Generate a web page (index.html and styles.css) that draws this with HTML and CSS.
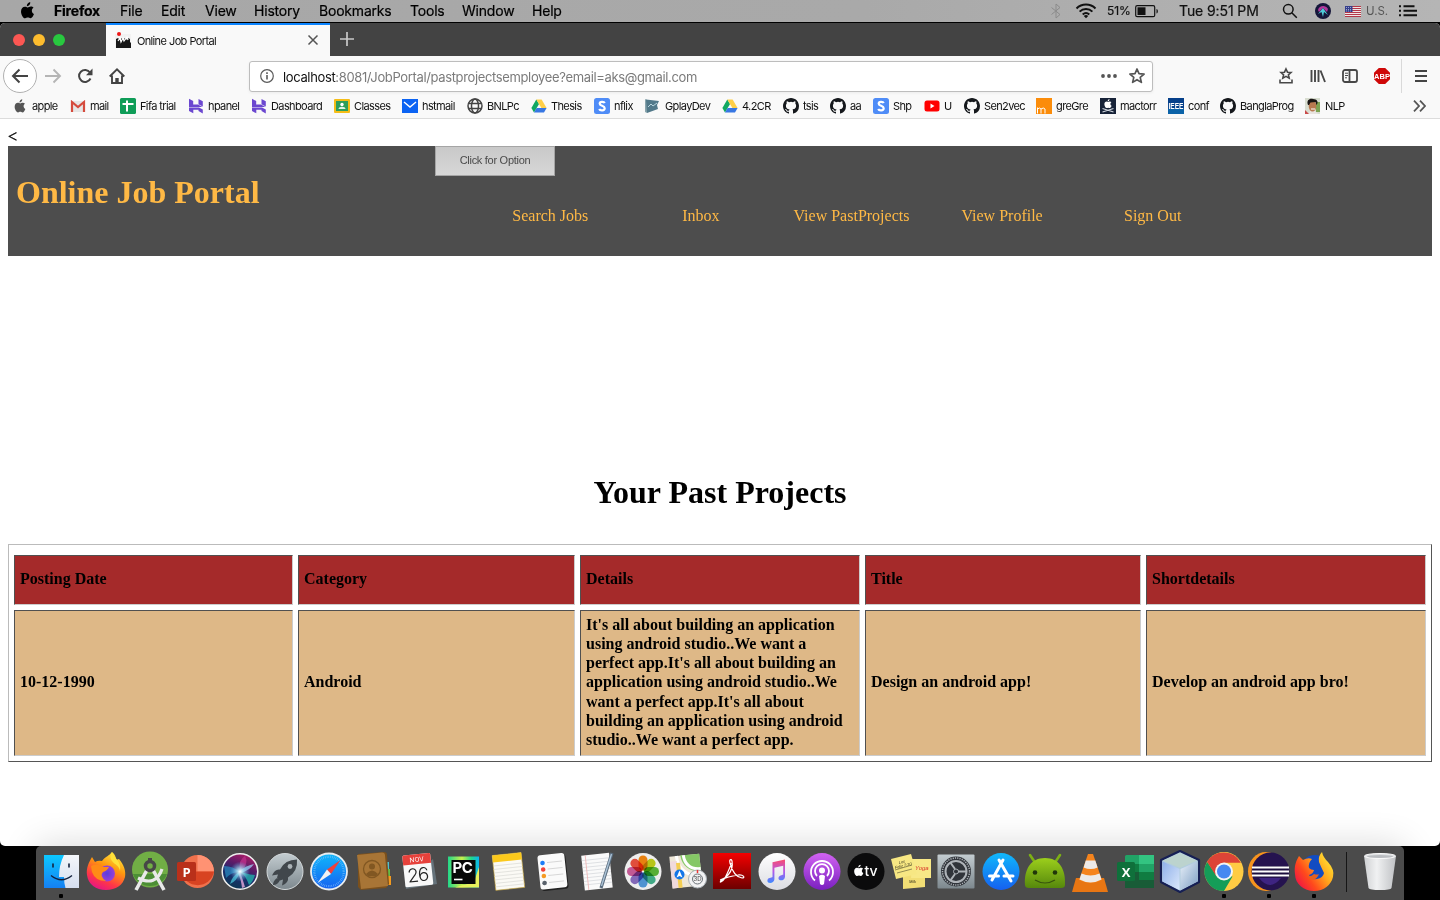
FILE: index.html
```html
<!DOCTYPE html>
<html lang="en">
<head>
<meta charset="utf-8">
<title>Online Job Portal</title>
<link rel="stylesheet" href="styles.css">
</head>
<body>
<svg class="defs" width="0" height="0">
  <defs>
    <linearGradient id="gBlue" x1="0" y1="0" x2="0" y2="1"><stop offset="0" stop-color="#10b8fb"/><stop offset="1" stop-color="#1560f0"/></linearGradient>
    <linearGradient id="gFinder" x1="0" y1="0" x2="0" y2="1"><stop offset="0" stop-color="#0cc8ff"/><stop offset="1" stop-color="#1580f3"/></linearGradient>
    <linearGradient id="gFace" x1="0" y1="0" x2="0" y2="1"><stop offset="0" stop-color="#f4f6fa"/><stop offset="1" stop-color="#d6dff0"/></linearGradient>
    <linearGradient id="gFox" x1=".8" y1="0" x2=".3" y2="1"><stop offset="0" stop-color="#fff044"/><stop offset=".4" stop-color="#ff980e"/><stop offset=".75" stop-color="#ff3647"/><stop offset="1" stop-color="#e31587"/></linearGradient>
    <linearGradient id="gFox2" x1="1" y1=".1" x2="0" y2=".8"><stop offset="0" stop-color="#fff23a"/><stop offset=".4" stop-color="#ffa51c"/><stop offset=".7" stop-color="#ff4a1c"/><stop offset="1" stop-color="#f01048"/></linearGradient>
    <radialGradient id="gPurple"><stop offset="0" stop-color="#5a3cdc"/><stop offset="1" stop-color="#9a3fd8"/></radialGradient>
    <linearGradient id="gSilver" x1="0" y1="0" x2="0" y2="1"><stop offset="0" stop-color="#c3ccd0"/><stop offset="1" stop-color="#7d888e"/></linearGradient>
    <linearGradient id="gSiri" x1=".7" y1="0" x2=".3" y2="1"><stop offset="0" stop-color="#b01c66"/><stop offset=".35" stop-color="#5a1c68"/><stop offset=".6" stop-color="#1d2c70"/><stop offset="1" stop-color="#0a3a52"/></linearGradient>
    <radialGradient id="gGlow"><stop offset="0" stop-color="#fff"/><stop offset=".3" stop-color="#b4e6f5" stop-opacity=".8"/><stop offset="1" stop-color="#4fa8e0" stop-opacity="0"/></radialGradient>
    <linearGradient id="gAcro" x1="0" y1="0" x2="0" y2="1"><stop offset="0" stop-color="#f40000"/><stop offset="1" stop-color="#6d0000"/></linearGradient>
    <linearGradient id="gNote" x1="0" y1="0" x2="0" y2="1"><stop offset="0" stop-color="#fa4b6e"/><stop offset=".5" stop-color="#b457e8"/><stop offset="1" stop-color="#3d8bff"/></linearGradient>
    <linearGradient id="gPod" x1="0" y1="0" x2="0" y2="1"><stop offset="0" stop-color="#d263f2"/><stop offset="1" stop-color="#7a20c0"/></linearGradient>
    <linearGradient id="gDroid" x1="0" y1="0" x2="0" y2="1"><stop offset="0" stop-color="#9ccf1c"/><stop offset="1" stop-color="#56880c"/></linearGradient>
    <linearGradient id="gPc" x1="0" y1="0" x2="1" y2="0"><stop offset="0" stop-color="#21d789"/><stop offset=".45" stop-color="#c8f04c"/><stop offset=".75" stop-color="#21d789"/><stop offset="1" stop-color="#09b5f2"/></linearGradient>
    <linearGradient id="gCubeL" x1="0" y1="0" x2="1" y2="1"><stop offset="0" stop-color="#8fb0ea"/><stop offset="1" stop-color="#dbe8fb"/></linearGradient>
    <linearGradient id="gCubeR" x1="0" y1="0" x2="1" y2="1"><stop offset="0" stop-color="#e6eef8"/><stop offset="1" stop-color="#7fa0c4"/></linearGradient>
    <linearGradient id="gTrash" x1="0" y1="0" x2="1" y2="0"><stop offset="0" stop-color="#cfd1d3"/><stop offset=".4" stop-color="#f0f1f2"/><stop offset="1" stop-color="#bfc1c4"/></linearGradient>
    <linearGradient id="gMusic" x1="0" y1="0" x2="0" y2="1"><stop offset="0" stop-color="#fff"/><stop offset="1" stop-color="#dcdde2"/></linearGradient>

    <symbol id="apple" viewBox="0 0 14 16"><path d="M9.600.2c.1 1-.3 1.900-.9 2.600-.6.700-1.500 1.200-2.300 1.100-.1-1 .3-1.900.9-2.500C7.900.700 8.900.200 9.600.200zM12.700 5.500c-1.100.7-1.600 1.600-1.600 2.800 0 1.300.8 2.500 2 3-.5 1.400-1.800 4-3.300 4-.9 0-1.400-.6-2.500-.6s-1.600.6-2.500.6C2.900 15.400.9 11.800.9 8.900c0-2.700 1.700-4.500 3.700-4.500 1.100 0 2 .7 2.600.7.700 0 1.700-.8 3-.8 1 0 1.900.4 2.500 1.200z"/></symbol>
    <symbol id="github" viewBox="0 0 16 16"><path fill="#15181c" d="M8 0C3.580 0 0 3.580 0 8c0 3.540 2.290 6.530 5.470 7.590.4.070.55-.17.55-.38 0-.19-.01-.82-.01-1.490-2.010.37-2.530-.49-2.690-.94-.09-.23-.48-.94-.82-1.130-.28-.15-.68-.52-.01-.53.63-.01 1.080.58 1.230.82.72 1.210 1.870.87 2.330.66.07-.52.28-.87.510-1.070-1.780-.2-3.640-.89-3.640-3.950 0-.87.310-1.590.82-2.150-.08-.2-.36-1.020.08-2.120 0 0 .67-.21 2.200.82a7.400 7.400 0 0 1 4 0c1.530-1.040 2.200-.82 2.200-.82.44 1.100.16 1.920.08 2.120.51.56.82 1.270.82 2.150 0 3.070-1.870 3.750-3.650 3.950.29.25.54.73.54 1.480 0 1.070-.01 1.930-.01 2.200 0 .21.15.46.55.38A8 8 0 0 0 16 8c0-4.420-3.580-8-8-8z"/></symbol>
    <symbol id="drive" viewBox="0 0 16 16"><path fill="#11a861" d="M5.300 1.500 8 6.100 3 14.500.4 10z"/><path fill="#ffcf48" d="M5.300 1.500h5.300l5 8.500h-5.200z"/><path fill="#3777e3" d="M5.600 10h10L13 14.500H3z"/></symbol>
    <symbol id="host" viewBox="0 0 16 16"><path fill="#6b47d0" d="M1 .8 5.200 3v3.400H10L14.500 9H1zM10.500 1 14.800 3.200v5.300l-4.300-2.300zM1.500 9.600H11l3.800 1.800v4L10.500 13v-1.300H5.300v3.600L1 13V9.600z"/></symbol>
    <symbol id="sbox" viewBox="0 0 16 16"><rect width="16" height="16" rx="2.500" fill="#4f8cf7"/><path fill="none" stroke="#fff" stroke-width="2.200" d="M10.800 5C10 3.500 5.700 3.300 5.700 5.700 5.700 8 10.700 7.700 10.700 10.200 10.700 13 6 12.800 5.200 11"/></symbol>
  </defs>
</svg>

<header class="menubar">
  <svg class="logo" width="15" height="17"><use href="#apple"/></svg>
  <nav class="menus"><b>Firefox</b><span>File</span><span>Edit</span><span>View</span><span>History</span><span>Bookmarks</span><span>Tools</span><span>Window</span><span>Help</span></nav>
  <div class="status">
    <svg width="12" height="16" viewBox="0 0 12 16" fill="none" stroke="#8b8b8b"><path d="M1.500 4.500l8.500 7-4 3.500V1l4 3.500-8.500 7"/></svg>
    <svg width="22" height="16" viewBox="0 0 22 16" fill="none" stroke="#111" stroke-width="2"><path d="M1.500 5.500a13.500 13.500 0 0 1 19 0M4.600 8.600a9.200 9.200 0 0 1 12.800 0M7.700 11.500a5 5 0 0 1 6.600 0"/><path d="M8.800 13a3.500 3.500 0 0 1 4.400 0L11 15.300z" fill="#111" stroke="none"/></svg>
    <span class="pct">51%</span>
    <svg width="24" height="14" viewBox="0 0 24 14"><rect x=".7" y="1.700" width="19" height="11" rx="1.500" fill="none" stroke="#111" stroke-width="1.200"/><rect x="2.500" y="3.300" width="8" height="7.700" fill="#111"/><path d="M21.500 5c1.800.5 1.800 4 0 4.500z" fill="#111"/></svg>
    <span class="clock">Tue 9:51 PM</span>
    <svg class="lens" width="16" height="16" viewBox="0 0 16 16" fill="none" stroke="#111" stroke-width="1.500"><circle cx="6.300" cy="6.300" r="4.800"/><path d="M9.800 9.800l5 5"/></svg>
    <svg width="16" height="16" viewBox="0 0 16 16"><circle cx="8" cy="8" r="8" fill="#15163a"/><path d="M3 7c1-4 7-6 10-1l-1 3-4-4-4 4z" fill="#b0389c"/><path d="M8 5l5 7-4-3-1 5-1.500-5L3 11z" fill="#4fcbd8"/></svg>
    <svg width="16" height="11" viewBox="0 0 16 11"><rect width="16" height="11" fill="#f1e6e6"/><path d="M0 .5h16M0 2.500h16M0 4.500h16M0 6.500h16M0 8.500h16M0 10.500h16" stroke="#b33848"/><rect width="7.500" height="6" fill="#36408c"/><path d="M1 1.500h6M1 3.500h6M1 5h6" stroke="#c9cbe8" stroke-width=".7" stroke-dasharray="1 1"/></svg>
    <span class="locale">U.S.</span>
    <svg width="18" height="12" viewBox="0 0 18 12" stroke="#111" stroke-width="1.900"><path d="M4.500 1.300H15.500M4.500 5.800H18M4.500 10.300H18M0 1.300h2M0 5.800h2M0 10.300h2"/></svg>
  </div>
</header>

<main class="window">
  <div class="tabstrip">
    <div class="lights"><i class="close"></i><i class="min"></i><i class="max"></i></div>
    <div class="tab">
      <svg width="16" height="17" viewBox="0 0 16 17"><rect y="2" width="16" height="14" fill="#f2f2f2"/><path d="M1 7l2-1 2 2 2-2 1 2 2-2 1 2 2-2 2 1v4l1-1v6H1z" fill="#181818"/><path d="M3 9l2-3 1 4 2-4 1 3 3-4 1 3" stroke="#fff" stroke-width="1.200" fill="none"/><circle cx="4" cy="2" r="2" fill="#ee1818"/></svg>
      <span>Online Job Portal</span>
      <svg class="x" width="10" height="10" viewBox="0 0 10 10" stroke="#555" stroke-width="1.500"><path d="M.5.5l9 9M9.500.5l-9 9"/></svg>
    </div>
    <svg class="plus" width="14" height="14" viewBox="0 0 14 14" stroke="#c9c9c9" stroke-width="1.700"><path d="M7 0v14M0 7h14"/></svg>
  </div>

  <div class="toolbar">
    <div class="back"><svg width="18" height="16" viewBox="0 0 18 16" fill="none" stroke="#444" stroke-width="2"><path d="M17 8H2M8.500 1.500L2 8l6.500 6.500"/></svg></div>
    <svg class="fwd" width="18" height="16" viewBox="0 0 18 16" fill="none" stroke="#b5b5b5" stroke-width="1.900"><path d="M1 8h15M9.500 1.500L16 8l-6.500 6.500"/></svg>
    <svg class="reload" width="16" height="16" viewBox="0 0 16 16" fill="none" stroke="#444" stroke-width="2"><path d="M13 4.500A6 6 0 1 0 13.500 10.500"/><path d="M15.500 .5v6.800H9z" fill="#444" stroke="none"/></svg>
    <svg class="home" width="16" height="16" viewBox="0 0 16 16" fill="none" stroke="#444" stroke-width="1.900"><path d="M.7 8.500L8 1.300l7.300 7.200M3 7.500V15h10V7.500"/><path d="M6.300 15v-5h3.400v5z" fill="#444" stroke="none"/></svg>
    <div class="urlbar">
      <svg width="14" height="14" viewBox="0 0 14 14" fill="none" stroke="#5a5a5a"><circle cx="7" cy="7" r="6.300" stroke-width="1.200"/><path d="M7 6v4.500M7 3.300v1.600" stroke-width="1.600"/></svg>
      <span class="url"><em>localhost</em>:8081/JobPortal/pastprojectsemployee?email=aks@gmail.com</span>
      <svg width="16" height="4" viewBox="0 0 16 4" fill="#555"><circle cx="2" cy="2" r="1.900"/><circle cx="8" cy="2" r="1.900"/><circle cx="14" cy="2" r="1.900"/></svg>
      <svg class="star" width="16" height="16" viewBox="0 0 16 16" fill="none" stroke="#555" stroke-width="1.700" stroke-linejoin="round"><path d="M8 1l2 4.700 5.100.4-3.900 3.300 1.200 5L8 11.700 3.600 14.400l1.200-5L.9 6.100 6 5.700z"/></svg>
    </div>
    <div class="tools">
      <svg width="16" height="16" viewBox="0 0 16 16" fill="none" stroke="#484848" stroke-width="1.600"><path d="M8 1l1.500 3.200 3.500.3-2.600 2.300.8 3.400L8 8.400l-3.200 1.800.8-3.400L3 4.500l3.500-.3zM2 11.500v3.200h12v-3.200"/></svg>
      <svg width="16" height="14" viewBox="0 0 16 14" fill="none" stroke="#484848" stroke-width="1.900"><path d="M1.500 1v12M5 1v12M8.500 1v12M10.500 1.500l4.500 11.500"/></svg>
      <svg width="16" height="14" viewBox="0 0 16 14" fill="none" stroke="#484848" stroke-width="1.800"><rect x="1" y="1" width="14" height="12" rx="2"/><path d="M7.500 1v12"/><path d="M3 4.200h3M3 6.500h3M3 8.800h2" stroke-width="1"/></svg>
      <svg width="16" height="16" viewBox="0 0 16 16"><path d="M4.800 0h6.400L16 4.800v6.400L11.200 16H4.800L0 11.200V4.800z" fill="#cf0808"/><text class="abp" x="8" y="10.800" text-anchor="middle">ABP</text></svg>
    </div>
    <div class="burger"><svg width="12" height="12" viewBox="0 0 12 12" stroke="#444" stroke-width="1.900"><path d="M0 1h12M0 6h12M0 11h12"/></svg></div>
  </div>

  <div class="bookmarks">
    <a><svg class="ap" width="16" height="14"><use href="#apple"/></svg>apple</a>
    <a><svg width="16" height="16" viewBox="0 0 16 16"><path d="M1 3h14v11H1z" fill="#e6e6e6"/><path d="M2 14V4l6 5 6-5v10" fill="none" stroke="#d54b3d" stroke-width="2.200"/></svg>mail</a>
    <a><svg width="16" height="16" viewBox="0 0 16 16"><rect width="16" height="16" rx="1.500" fill="#0f9d58"/><path d="M7 2.500v11M2.500 6h11" stroke="#fff" stroke-width="2"/></svg>Fifa trial</a>
    <a><svg width="16" height="16"><use href="#host"/></svg>hpanel</a>
    <a><svg width="16" height="16"><use href="#host"/></svg>Dashboard</a>
    <a><svg width="16" height="16" viewBox="0 0 16 16"><rect y="1" width="16" height="14" rx="1" fill="#f5bd18"/><rect x="2" y="3" width="12" height="10" fill="#2f9e5b"/><circle cx="8" cy="6.500" r="1.700" fill="#fff"/><path d="M4.500 11c0-3 7-3 7 0z" fill="#e3f3e8"/></svg>Classes</a>
    <a><svg width="16" height="16" viewBox="0 0 16 16"><rect y="1" width="16" height="14" fill="#0b63f3"/><path d="M2 4l6 5 6-5" fill="none" stroke="#fff" stroke-width="1.400"/></svg>hstmail</a>
    <a><svg width="16" height="16" viewBox="0 0 16 16" fill="none" stroke="#444" stroke-width="1.500"><circle cx="8" cy="8" r="7"/><ellipse cx="8" cy="8" rx="3.500" ry="7"/><path d="M1.500 5.500h13M1.500 10.500h13"/></svg>BNLPc</a>
    <a><svg width="16" height="16"><use href="#drive"/></svg>Thesis</a>
    <a><svg width="16" height="16"><use href="#sbox"/></svg>nflix</a>
    <a><svg width="16" height="16" viewBox="0 0 16 16"><path d="M0 1l2 1v13l-2-1z" fill="#88a4ad"/><path d="M1 1.500L14 3l-2 4 1 4L2 15z" fill="#52798a"/><path d="M3 9l3-3 2 2 4-3" stroke="#b9d6df" fill="none"/></svg>GplayDev</a>
    <a><svg width="16" height="16"><use href="#drive"/></svg>4.2CR</a>
    <a><svg width="16" height="16"><use href="#github"/></svg>tsis</a>
    <a><svg width="16" height="16"><use href="#github"/></svg>aa</a>
    <a><svg width="16" height="16"><use href="#sbox"/></svg>Shp</a>
    <a><svg width="16" height="16" viewBox="0 0 16 16"><rect x=".5" y="2.500" width="15" height="11" rx="2.500" fill="#f00"/><path d="M6.500 5.500v5L10.500 8z" fill="#fff"/></svg>U</a>
    <a><svg width="16" height="16"><use href="#github"/></svg>Sen2vec</a>
    <a><svg width="16" height="16" viewBox="0 0 16 16"><rect width="16" height="16" fill="#fb8c0a"/><path d="M1.500 15.500V9.500M1.500 11q2.300-2 3.500 0v4.500M5 11q2.500-2 4 0v4.500" fill="none" stroke="#fff"/></svg>greGre</a>
    <a><svg width="16" height="16" viewBox="0 0 16 16"><rect width="16" height="16" fill="#172338"/><use href="#apple" x="3.500" y="1" width="9" height="9.500" fill="#fff"/><path d="M2.500 10.500l11 3.500M13.500 10.500l-11 3.500" stroke="#cfd5dd" stroke-width="1.200"/></svg>mactorr</a>
    <a><svg width="16" height="16" viewBox="0 0 16 16"><rect width="16" height="16" fill="#06408a"/><path d="M0 11h16v5H0z" fill="#0b63a8"/><text class="ieee" x="8" y="11" text-anchor="middle" textLength="15" lengthAdjust="spacingAndGlyphs">IEEE</text></svg>conf</a>
    <a><svg width="16" height="16"><use href="#github"/></svg>BanglaProg</a>
    <a><svg width="16" height="16" viewBox="0 0 16 16"><rect width="15" height="16" fill="#d8ddd0"/><path d="M11 4h4v10h-4z" fill="#7ca353"/><path d="M3 16l2-3h5l3 3z" fill="#e8e4e0"/><path d="M0 12l4 4H0z" fill="#c94a4a"/><ellipse cx="7.500" cy="8" rx="3.800" ry="5.500" fill="#b87950"/><path d="M3 7C1 2 5 0 8 1c4 0 6 3 3.500 6l-1-3-5 .5L4 7z" fill="#1a1614"/><path d="M6 11h4" stroke="#fff"/></svg>NLP</a>
    <svg class="more" width="13" height="12" viewBox="0 0 13 12" fill="none" stroke="#555" stroke-width="1.800"><path d="M1 .7L6 6l-5 5.300M7 .7L12 6l-5 5.300"/></svg>
  </div>

  <section class="page">
    <div class="stray">&lt;</div>
    <div class="banner">
      <h1>Online Job Portal</h1>
      <div class="right">
        <button class="option">Click for Option</button>
        <nav class="links"><a>Search Jobs</a><a>Inbox</a><a>View PastProjects</a><a>View Profile</a><a>Sign Out</a></nav>
      </div>
    </div>
    <h1 class="heading">Your Past Projects</h1>
    <div class="table">
      <div class="cell th">Posting Date</div><div class="cell th">Category</div><div class="cell th">Details</div><div class="cell th">Title</div><div class="cell th">Shortdetails</div>
      <div class="cell">10-12-1990</div><div class="cell">Android</div>
      <div class="cell">It's all about building an application<br>using android studio..We want a<br>perfect app.It's all about building an<br>application using android studio..We<br>want a perfect app.It's all about<br>building an application using android<br>studio..We want a perfect app.</div>
      <div class="cell">Design an android app!</div><div class="cell">Develop an android app bro!</div>
    </div>
  </section>
</main>

<footer class="dock">
  <div class="app on"><svg viewBox="0 0 40 40"><rect x="3" y="3" width="35" height="33" fill="url(#gFinder)"/><path d="M23 3h15v33H24.500q-1.500-5-1.500-11h-5Q18 13 23 3z" fill="url(#gFace)"/><path d="M12 12v3M28 12v3" stroke="#14213d" stroke-width="1.600" stroke-linecap="round"/><path d="M10 23.500q10.500 8.500 21 0" fill="none" stroke="#14213d" stroke-width="1.300"/></svg></div>
  <div class="app"><svg viewBox="0 0 40 40"><path d="M1 23C0 16 3 10 6 5l3 5q3-2 7-1C20 4 23 4 26 0c3 2 4 5 4 8l3-1c5 6 7 12 6 18-2 8-9 13-19 13S2 32 1 23z" fill="url(#gFox)"/><circle cx="21" cy="21.500" r="8" fill="url(#gPurple)"/><path d="M5 14q7-3 11 1h7q-2 4-6 5-4 4 3 9-11 0-14-9z" fill="#ff8b16"/><path d="M26 0c1 5 10 9 8 19-1-6-5-6-8-10q-3-4 0-9z" fill="#ffe13a"/></svg></div>
  <div class="app"><svg viewBox="0 0 40 40"><circle cx="20" cy="17.500" r="18" fill="#71ae45"/><path d="M3 22a18 18 0 0 0 34 0z" fill="#4c8e35"/><path d="M17 18L6 38M23 18l11 20" stroke="#e9e9e9" stroke-width="3.600"/><path d="M8 26q18 9 24-9" fill="none" stroke="#e9e9e9" stroke-width="3.200"/><circle cx="20" cy="14" r="4.500" fill="none" stroke="#474747" stroke-width="3.500"/><path d="M18 6h4v4h-4z" fill="#474747"/></svg></div>
  <div class="app"><svg viewBox="0 0 40 40"><circle cx="22.500" cy="19.500" r="16.500" fill="#f0714c"/><path d="M22.500 3a16.500 16.500 0 0 1 16.500 16.500H22.500z" fill="#ff9273"/><path d="M6.500 19.500H39a16.500 16.500 0 0 1-32.500 0z" fill="#d84322"/><rect x="2" y="10" width="19" height="19" rx="1.500" fill="#b9301a"/><text class="glyph" x="11.500" y="24.500" text-anchor="middle">P</text></svg></div>
  <div class="app"><svg viewBox="0 0 40 40"><circle cx="20" cy="19.500" r="17.800" fill="url(#gSiri)" stroke="#eee" stroke-width="1.500"/><path d="M4 14q9 0 16 6-9 0-14 6z" fill="#2c9fd0" opacity=".6"/><path d="M20 19Q18 8 25 4q4 7-3 15z" fill="#c43290" opacity=".7"/><path d="M20 20q3 8 5 15l-3 1q-1-9-4-15z" fill="#e9a9dc" opacity=".8"/><path d="M20 19q5 3 15 4-2 7-6 10-3-9-9-14z" fill="#23b7ae" opacity=".75"/><path d="M19 20q-7 4-9 12 7-3 10-12z" fill="#48c5da" opacity=".75"/><path d="M18 20q9-7 16-8-4 6-13 9z" fill="#9fdcff" opacity=".7"/><circle cx="20" cy="19.500" r="10" fill="url(#gGlow)"/></svg></div>
  <div class="app"><svg viewBox="0 0 40 40"><circle cx="20" cy="19.500" r="18" fill="url(#gSilver)" stroke="#d3d8da"/><path d="M32 7.500q-12 0-17 10-5-1-8 6l6-1-1 3 3 3 3-1-1 6q7-3 6-8 10-6 9-18zM12 26q-4 3-4 7 5 0 7-5z" fill="#41474c"/><circle cx="25" cy="14.500" r="2.400" fill="#abb3b7"/></svg></div>
  <div class="app"><svg viewBox="0 0 40 40"><circle cx="20" cy="19.500" r="18" fill="url(#gBlue)" stroke="#e9edf0" stroke-width="1.800"/><circle cx="20" cy="19.500" r="14.700" fill="none" stroke="#80c4fa" stroke-width="2.200" stroke-dasharray=".5 1.300"/><path d="M31.500 8L22 22l-4-4.500z" fill="#f1403a"/><path d="M8.500 31L18 17.500l4 4.500z" fill="#f2f2f2"/></svg></div>
  <div class="app"><svg viewBox="0 0 40 40"><path d="M30 4h3v8h-3z" fill="#ddd"/><path d="M31 10h4v8h-4z" fill="#4cc0d0"/><path d="M32 17h4v8h-4z" fill="#62bb46"/><path d="M33 24h4v9h-4z" fill="#f39a1e"/><path d="M4 2l26-2q3 0 3 3l2 29-3 4-25 2-3-3z" fill="#7b501c"/><path d="M3 3l25-2.500q3 0 3 3L34 34 7 37z" fill="#a87536"/><circle cx="18" cy="17" r="8.500" fill="none" stroke="#815722" stroke-width="1.300"/><circle cx="18" cy="14.500" r="3" fill="#815722"/><path d="M12 22q6-7 12 0l-2 2h-8z" fill="#815722"/></svg></div>
  <div class="app"><svg viewBox="0 0 40 40"><path d="M34 7l4 25-31 5-1-5z" fill="#65727a"/><g transform="rotate(-6 20 20)"><rect x="5" y="2" width="28" height="32" rx="1.500" fill="#f8f8f8"/><path d="M5 12V3.500Q5 2 6.500 2h25Q33 2 33 3.500V12z" fill="#e6413b"/><text class="month" x="19" y="9.500" text-anchor="middle">NOV</text><text class="day" x="18.500" y="29.500" text-anchor="middle">26</text></g></svg></div>
  <div class="app"><svg viewBox="0 0 40 40"><path d="M4 4.500h31v31H4z" fill="url(#gPc)"/><path d="M35 15v20.500H11L30 30z" fill="#e8f05c"/><path d="M7.500 8h24v24h-24z" fill="#080808"/><text class="pc" x="8.500" y="20.500">PC</text><path d="M10 27.500h8.500" stroke="#fff" stroke-width="1.600"/></svg></div>
  <div class="app"><svg viewBox="0 0 40 40"><g transform="rotate(-6 20 20)"><rect x="6" y="2" width="29" height="35" fill="#fbfaf5" stroke="#d2ae3b" stroke-width=".6"/><path d="M6 2h29v7H6z" fill="#fbc91c"/><path d="M6 12.500h29M6 16h29M6 19.500h29M6 23h29M6 26.500h29M6 30h29M6 33.500h29" stroke="#d5d5d0" stroke-width=".6"/></g></svg></div>
  <div class="app"><svg viewBox="0 0 40 40"><g transform="rotate(-6 20 20)"><rect x="7" y="3" width="27" height="35" rx="3" fill="#222"/><rect x="6" y="2" width="27" height="34.500" rx="3" fill="#fafafa"/><circle cx="10.500" cy="10" r="2.300" fill="#1a7cf7"/><circle cx="10.500" cy="16.500" r="2.300" fill="#f0423b"/><circle cx="10.500" cy="23" r="2.300" fill="#f59a23"/><circle cx="10.500" cy="30" r="2.300" fill="#59616b"/><path d="M15 10h15M15 16.500h15M15 23h15M15 30h15" stroke="#c9c9c9" stroke-width=".7"/></g></svg></div>
  <div class="app"><svg viewBox="0 0 40 40"><g transform="rotate(-6 20 20)"><rect x="5" y="2" width="28" height="35" fill="#fafafa"/><path d="M5 7h28M5 10.500h28M5 14h28M5 17.500h28M5 21h28M5 24.500h28M5 28h28M5 31.500h28" stroke="#cdd0d5" stroke-width=".6"/><path d="M9 2v35" stroke="#eeb2b2" stroke-width=".8"/></g><path d="M34 1L23 36" stroke="#596b7c" stroke-width="3.200"/><path d="M33.500 2L23.500 34" stroke="#abc2d6" stroke-width="1.400"/></svg></div>
  <div class="app"><svg viewBox="0 0 40 40"><circle cx="20" cy="19.500" r="18.500" fill="#eeeeee"/><g class="petals"><rect x="15.500" y="3.500" width="9" height="15" rx="4.500" fill="#f98a11"/><rect x="15.500" y="3.500" width="9" height="15" rx="4.500" fill="#c5d31b" transform="rotate(45 20 19.500)"/><rect x="15.500" y="3.500" width="9" height="15" rx="4.500" fill="#5dbb3a" transform="rotate(90 20 19.500)"/><rect x="15.500" y="3.500" width="9" height="15" rx="4.500" fill="#45b590" transform="rotate(135 20 19.500)"/><rect x="15.500" y="3.500" width="9" height="15" rx="4.500" fill="#559ee0" transform="rotate(180 20 19.500)"/><rect x="15.500" y="3.500" width="9" height="15" rx="4.500" fill="#8c70c5" transform="rotate(225 20 19.500)"/><rect x="15.500" y="3.500" width="9" height="15" rx="4.500" fill="#d05f9f" transform="rotate(270 20 19.500)"/><rect x="15.500" y="3.500" width="9" height="15" rx="4.500" fill="#f05340" transform="rotate(315 20 19.500)"/></g></svg></div>
  <div class="app"><svg viewBox="0 0 40 40"><g transform="rotate(-6 20 20)"><rect x="4" y="3" width="30" height="32" fill="#eee7d8"/><path d="M15 3h19v18Q16 19 15 3z" fill="#85c866"/><path d="M18 3q1 15 16 15M11 3q1 21 23 22" stroke="#fff" stroke-width="3" fill="none"/><path d="M4 8h7v27H4z" fill="#f0dadd"/><path d="M12 10v25" stroke="#f4ce52" stroke-width="4"/></g><circle cx="12.500" cy="22.500" r="5" fill="#1476e8"/><path d="M12.500 18.500l3 7-3-1.500-3 1.500z" fill="#fff"/><circle cx="30.500" cy="27" r="9" fill="#f2f3f4" stroke="#a8b0b5"/><circle cx="30.500" cy="27" r="5" fill="none" stroke="#6b7278"/><path d="M30.500 18v3" stroke="#e33" stroke-width="1.500"/><text class="tiny" x="30.500" y="29.200" text-anchor="middle">3D</text></svg></div>
  <div class="app"><svg viewBox="0 0 40 40"><rect x="1" y="1" width="38" height="36" fill="url(#gAcro)"/><path d="M8 28c5-1 14-8 12-19-1-3-3-1-2 2 2 8 6 14 12 15 4 0 1-4-4-3-7 1-13 3-16 5-4 3 0 3 3-2 3-6 6-12 6-15" fill="none" stroke="#fff" stroke-width="1.200"/></svg></div>
  <div class="app"><svg viewBox="0 0 40 40"><circle cx="20" cy="19.500" r="18.500" fill="url(#gMusic)"/><path d="M15.500 10.200L28 7.500v17.200c0 4-6.500 5-6.500 1.500 0-3 4-3 4.700-3.500V13.800l-8.800 2v11.500c0 4.200-7 5-7 1.500 0-3.200 4.300-3 5.100-3.700z" fill="url(#gNote)"/></svg></div>
  <div class="app"><svg viewBox="0 0 40 40"><circle cx="20" cy="19.500" r="18.500" fill="url(#gPod)"/><g fill="none" stroke="#fff" stroke-width="1.800"><path d="M13 28.500a11 11 0 1 1 14 0"/><path d="M15 24a7 7 0 1 1 10 0"/></g><circle cx="20" cy="18.500" r="3" fill="#fff"/><path d="M17 24q3-2.500 6 0l-1 8q-2 2-4 0z" fill="#fff"/></svg></div>
  <div class="app"><svg viewBox="0 0 40 40"><circle cx="20" cy="19.500" r="18.500" fill="#0b0b0c"/><use href="#apple" x="7.500" y="12.500" width="10.500" height="12" fill="#fff"/><text class="tv" x="18.500" y="24">tv</text></svg></div>
  <div class="app"><svg viewBox="0 0 40 40"><path d="M12 22h22v13l-22 2z" fill="#f2de75"/><path d="M21 7h19v19H20z" fill="#f8e887"/><path d="M0 7l20-5 6 20-21 5z" fill="#f7e783"/><path d="M4 18l17-5M6 21l15-4" stroke="#69643d" stroke-width=".7"/><text class="scrawl" x="8" y="12" transform="rotate(-13 8 12)">Los</text><text class="scrawl" x="4" y="17" transform="rotate(-13 4 17)">Feliz 7:30</text><text class="scrawl red" x="24" y="18">Yoga</text><text class="scrawl" x="18" y="31">Milk</text></svg></div>
  <div class="app"><svg viewBox="0 0 40 40"><rect x="1.500" y="2.500" width="37" height="34" rx="1" fill="url(#gSilver)"/><circle cx="20" cy="19.500" r="15" fill="#30343a"/><g fill="none" stroke="#aeb3b8"><circle cx="20" cy="19.500" r="13.500" stroke-width="1.500" stroke-dasharray="1.200 1.100"/><circle cx="20" cy="19.500" r="10.500" stroke-width="2"/><circle cx="20" cy="19.500" r="2.500"/><path d="M22 19.500h8M19 17l-5-7M19 22l-5 7" stroke-width="2"/></g></svg></div>
  <div class="app"><svg viewBox="0 0 40 40"><circle cx="20" cy="19.500" r="18.500" fill="url(#gBlue)"/><path d="M22 8L11 28M18 8l12 21M8.500 24h9M23 24h9" stroke="#fff" stroke-width="3" stroke-linecap="round"/></svg></div>
  <div class="app"><svg viewBox="0 0 40 40"><path d="M9 9L5 3M31 9l4-6" stroke="#7db014" stroke-width="2.600" stroke-linecap="round"/><path d="M0 33C-1 17 6 6 20 6s21 11 20 27q0 3-4 3H4q-4 0-4-3z" fill="url(#gDroid)"/><circle cx="10" cy="20.500" r="2.300" fill="#20370a"/><circle cx="30" cy="20.500" r="2.300" fill="#20370a"/><path d="M10 28q10 6 20 0" stroke="#38540d" fill="none" stroke-width="1.200"/></svg></div>
  <div class="app"><svg viewBox="0 0 40 40"><path d="M6 26h28l4 14H2z" fill="#e87613"/><path d="M18 2h5l9 26q-11 6-23 0z" fill="#f5841d"/><path d="M15.800 8.500h9.500l2.300 7q-7 3-14 0zM11.500 21.500q9 4 18 0l2 6q-11 6-22 0z" fill="#eceae8"/></svg></div>
  <div class="app"><svg viewBox="0 0 40 40"><rect x="10" y="3" width="29" height="33" rx="1.500" fill="#21a366"/><path d="M24 3h15v9H24z" fill="#33c481"/><path d="M10 12h14v8H10z" fill="#107c41"/><path d="M10 20h29v16H10z" fill="#185c37"/><path d="M24 20h15v8H24z" fill="#107c41"/><rect x="2" y="10" width="18" height="19" rx="1.500" fill="#0f703b"/><text class="glyph" x="11" y="24.500" text-anchor="middle">X</text></svg></div>
  <div class="app"><svg viewBox="0 0 40 40"><path d="M20-1L39 8v22L20 40 1 30V8z" fill="#b2cdde" stroke="#161f54" stroke-width="2.200" stroke-linejoin="round"/><path d="M2.500 9.500l17 7.500v21l-17-8.500z" fill="url(#gCubeL)"/><path d="M37.500 9.500L20.500 17v21l17-8.500z" fill="url(#gCubeR)"/><path d="M20 1l17 7.500-17 7.500L3 8.500z" fill="#bcd3ce"/></svg></div>
  <div class="app on"><svg viewBox="0 0 40 40"><circle cx="20" cy="19.500" r="19.500" fill="#ffcc44"/><path d="M3.100 9.700A19.500 19.500 0 0 0 20 39l8.500-14.500-16-1z" fill="#159d58"/><path d="M3.100 9.700A19.500 19.500 0 0 1 36.900 10.700H20l-8 13z" fill="#dd4437"/><circle cx="20" cy="19.500" r="9" fill="#f4f4f4"/><circle cx="20" cy="19.500" r="7" fill="#4688f1"/></svg></div>
  <div class="app on"><svg viewBox="0 0 40 40"><ellipse cx="17" cy="19.500" rx="18" ry="19.500" fill="#f7941e"/><circle cx="21.500" cy="19.500" r="18.900" fill="#25134f"/><path d="M4 14h35v11H4z" fill="#1b0e3d"/><path d="M3 15.500h37M3 19.500h37M3 23.500h37" stroke="#fff" stroke-width="2"/><path d="M10 26h22q-11 14-22 0z" fill="#3e2482"/></svg></div>
  <div class="app on"><svg viewBox="0 0 40 40"><circle cx="21" cy="18" r="15" fill="#124cc2"/><path d="M1 22C0 14 2 9 5 4l4 4q5-3 9-1-4 4-3 9 2 2 5 2-1 4-5 5 2 5 8 4 6-1 7-6-3-6-5-11-1-6 3-10 1 5 6 10 7 8 5 15C37 33 30 39 20 39S1 32 1 22z" fill="url(#gFox2)"/><path d="M13 24q4 1 7-2 3 1 5 0-2 5-6 6-4-1-6-4z" fill="#e5601e"/></svg></div>
  <div class="sep"></div>
  <div class="app"><svg viewBox="0 0 40 40"><path d="M4 4l4.500 32q1 2 11.500 2t11.500-2L36 4z" fill="url(#gTrash)"/><ellipse cx="20" cy="4" rx="15.500" ry="2.500" fill="#dddfe1" stroke="#fafafa"/><ellipse cx="20" cy="4.500" rx="13" ry="1.500" fill="#b9bcc0"/></svg></div>
</footer>
</body>
</html>
```

FILE: styles.css
```css
* { box-sizing: border-box; }
body { margin: 0; width: 1440px; height: 900px; overflow: hidden; background: #000; display: flex; flex-direction: column; font-family: Inter, "Liberation Sans", sans-serif; color: #111; }
svg { display: block; flex: none; overflow: visible; }
.defs { position: absolute; }

.menubar { height: 22px; flex: none; display: flex; align-items: center; background: linear-gradient(90deg, #a7a7a7, #a9a9a9 60%, #b5b5b5); padding-left: 20px; font-size: 14px; line-height: 22px; white-space: nowrap; }
.logo { margin: -2px -1px 0 0; }
.menus { display: grid; grid-template-columns: 66px 41px 44px 49px 65px 91px 52px 70px 60px; margin-left: 20px; letter-spacing: -.2px; color: #000; -webkit-text-stroke: .2px; }
.status { flex: 1; display: grid; grid-template-columns: 25px 32px 28px 44px 104px 32px 30px 21px 33px 18px; align-items: center; justify-content: end; padding-right: 23px; }
.pct { font-size: 12px; letter-spacing: -.1px; -webkit-text-stroke: .2px; }
.clock { letter-spacing: -.1px; -webkit-text-stroke: .2px; }
.lens { margin-left: -1px; }
.locale { font-size: 11.500px; color: #555; letter-spacing: 0; }

.window { margin-top: 1px; height: 823px; flex: none; background: #fff; border-radius: 5px; overflow: hidden; display: flex; flex-direction: column; }
.tabstrip { height: 33px; flex: none; background: #434343; display: flex; align-items: center; }
.lights { width: 106px; padding-left: 13px; display: flex; gap: 8px; }
.lights i { width: 12px; height: 12px; border-radius: 50%; }
.close { background: #fc5753; }
.min { background: #fdbc2e; }
.max { background: #28c83f; }
.tab { width: 224px; height: 33px; background: #f9f9f9; border-top: 2px solid #0a84ff; display: flex; align-items: center; gap: 6px; padding: 0 12px 0 9px; font-size: 11px; letter-spacing: -.67px; word-spacing: .5px; }
.tab span { flex: 1; }
.x { margin-top: -2px; }
.plus { margin: -1px 0 0 10px; }

.toolbar { height: 40px; flex: none; background: #f9f9f9; display: flex; align-items: center; padding-left: 3px; }
.back { width: 34px; height: 34px; border: 1px solid #b1b1b1; border-radius: 50%; background: #fff; display: grid; place-items: center; }
.fwd { margin-left: 7px; }
.reload { margin-left: 15px; }
.home { margin-left: 16px; }
.urlbar { width: 904px; height: 31px; margin: 0 0 0 124px; border: 1px solid #bdbdbd; border-radius: 3px; background: #fff; display: flex; align-items: center; padding: 0 7px 0 10px; box-shadow: 0 1px 3px rgba(0,0,0,.06); }
.url { flex: 1; margin-left: 9px; padding-top: 1px; font-size: 13px; letter-spacing: -.36px; color: #7b7b7b; }
.url em { font-style: normal; color: #111; }
.star { margin-left: 12px; }
.tools { display: flex; align-items: center; gap: 16px; margin-left: 125px; }
.abp { font: bold 7.500px "Liberation Sans", sans-serif; fill: #fff; }
.burger { height: 34px; margin-left: 11px; padding-left: 13px; border-left: 1px solid #d9d9d9; display: flex; align-items: center; }

.bookmarks { height: 23px; flex: none; background: #f9f9f9; border-bottom: 1px solid #dcdcdc; display: grid; grid-template-columns: 58px 50px 68px 63px 83px 68px 65px 64px 63px 51px 77px 61px 47px 43px 51px 40px 72px 64px 68px 52px 85px 108px 13px; padding: 0 0 2px 12px; align-items: center; font-size: 11px; letter-spacing: -.62px; white-space: nowrap; }
.bookmarks a { display: flex; align-items: center; gap: 4px; }
.ap { fill: #555; }
.ieee { font: bold 9px "Liberation Sans", sans-serif; fill: #fff; letter-spacing: 0; }

.page { flex: 1; padding: 8px 8px 0; font: 16px/19px "Liberation Serif", serif; color: #000; }
.stray { height: 19px; -webkit-text-stroke: .4px; }
.banner { height: 110px; background: #4d4d4d; display: flex; color: #ffb945; }
.banner h1 { width: 427px; margin: 0; padding: 28px 0 0 8px; font-size: 32px; line-height: 37px; }
.option { display: block; width: 120px; height: 30px; padding: 0 0 2px; border: 1px solid #a5a5a5; background: linear-gradient(#c9c9c9, #d7d7d7); font: 11px "Liberation Sans", sans-serif; letter-spacing: -.28px; color: #4a4a4a; }
.links { display: grid; grid-template-columns: repeat(5, 150.600px); margin: 30px 0 0 40px; text-align: center; }
.heading { margin: 218px 0 0; text-align: center; font-size: 32px; line-height: 37px; }
.table { margin-top: 33px; height: 218px; border: 1px solid; border-color: #bbb #555 #555 #bbb; padding: 10px 5px 5px; display: grid; grid-template-columns: 279px 277px 280px 276px 280px; grid-template-rows: 50px 146px; gap: 5px; }
.cell { border: 1px solid; border-color: #505050 #ccc #ccc #505050; background: #deb887; padding: 0 5px 2px; font-weight: bold; line-height: 19.200px; display: flex; align-items: center; white-space: nowrap; }
.th { background: #a52a2a; }

.dock { position: relative; flex: none; width: 1368px; height: 54px; margin-left: 36px; padding: 6px 0 0 2.500px; border-radius: 5px 5px 0 0; background: #4b4b4b; box-shadow: 0 0 36px rgba(0,0,0,.16); display: flex; }
.app { width: 44.760px; display: flex; flex-direction: column; align-items: center; }
.app svg { width: 40px; height: 40px; }
.on::after { content: ""; width: 4px; height: 4px; margin-top: 2px; border-radius: 1px; background: #000; }
.sep { width: 1px; height: 40px; margin: 0 10px; background: #161616; }
.petals rect { mix-blend-mode: multiply; }
.glyph { font: bold 13px "Open Sans", sans-serif; fill: #fff; }
.month { font: 6.500px Inter, sans-serif; fill: #fff; }
.day { font: 300 19px Inter, sans-serif; fill: #222; letter-spacing: -1px; }
.pc { font: bold 15px Inter, sans-serif; fill: #fff; letter-spacing: -.5px; }
.tiny { font: 6px Inter, sans-serif; fill: #444; }
.tv { font: 500 14px Inter, sans-serif; fill: #fff; }
.scrawl { font: italic 4px "Liberation Sans", sans-serif; fill: #3b3820; }
.red { font-size: 6px; fill: #d8342a; }
```
